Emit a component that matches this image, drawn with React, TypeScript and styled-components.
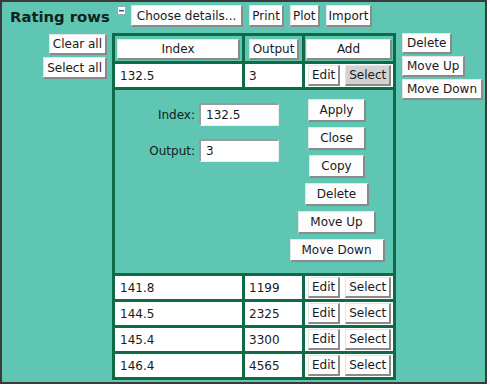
import styled, { createGlobalStyle } from "styled-components";

const GlobalStyle = createGlobalStyle`
  body {
    margin: 0;
    font-family: "DejaVu Sans", "Liberation Sans", sans-serif;
    background: #ffffff;
  }
`;

const Panel = styled.div`
  width: 487px;
  height: 384px;
  box-sizing: border-box;
  border: 2px solid #3a3a3a;
  background-color: #5ec6b3;
  color: #10221c;
`;

const TopBar = styled.div`
  display: flex;
  align-items: center;
  height: 31px;
  box-sizing: border-box;
  padding: 3px 0 6px 8px;
`;

const Title = styled.div`
  font-size: 14.8px;
  font-weight: 700;
  white-space: nowrap;
`;

const Toggle = styled.svg`
  align-self: flex-start;
  margin: 1px 5px 0 7px;
`;

const ButtonGroup = styled.div`
  display: flex;
  gap: 6px;
`;

const Button = styled.button<{ $h?: number; $pad?: number; $full?: boolean; $on?: boolean }>`
  box-sizing: border-box;
  height: ${(p) => p.$h ?? 21}px;
  width: ${(p) => (p.$full ? "100%" : "auto")};
  padding: 0 ${(p) => p.$pad ?? 3}px;
  margin: 0;
  font-family: "DejaVu Sans", "Liberation Sans", sans-serif;
  font-size: 12px;
  line-height: 14px;
  color: #1a1a1a;
  background: ${(p) => (p.$on ? "#d2d2d2" : "#fdfdfd")};
  border-style: solid;
  border-width: 1px 2px 2px 1px;
  border-color: #e4e4e4 #8a8a8a #8a8a8a #e4e4e4;
  white-space: nowrap;
  cursor: pointer;
`;

const Body = styled.div`
  display: flex;
  align-items: flex-start;
`;

const LeftCol = styled.div`
  width: 105px;
  flex-shrink: 0;
  display: flex;
  flex-direction: column;
  align-items: flex-end;
  gap: 2px;
  padding-top: 1px;
`;

const RightCol = styled.div`
  margin-left: 6px;
  display: flex;
  flex-direction: column;
  align-items: flex-start;
  gap: 2px;
`;

const Grid = styled.table`
  flex-shrink: 0;
  width: 284px;
  margin-left: 5px;
  border-collapse: separate;
  border-spacing: 3px;
  background-color: #0e6b45;
  table-layout: fixed;
`;

const HeadCell = styled.td<{ $pad?: string }>`
  box-sizing: border-box;
  height: 25px;
  padding: ${(p) => p.$pad ?? "0 2px"};
  background-color: #5ec6b3;
  text-align: center;
  vertical-align: middle;
`;

const Cell = styled.td<{ $pad?: number }>`
  height: 23px;
  padding: 0 ${(p) => p.$pad ?? 5}px;
  background-color: #ffffff;
  font-size: 12px;
  color: #1a1a1a;
  vertical-align: middle;
`;

const ActionCell = styled.td`
  height: 23px;
  padding: 0 2px 0 3px;
  background-color: #ffffff;
  vertical-align: middle;
`;

const Actions = styled.div`
  display: flex;
  gap: 5px;
`;

const EditCell = styled.td`
  height: 183px;
  padding: 0;
  background-color: #5ec6b3;
  vertical-align: top;
`;

const EditPanel = styled.div`
  display: flex;
  align-items: flex-start;
  padding-top: 9px;
`;

const Form = styled.div`
  width: 164px;
  margin-top: 4px;
  display: grid;
  grid-template-columns: 1fr 80px;
  column-gap: 4px;
  row-gap: 13px;
  align-items: center;
`;

const Label = styled.label`
  font-size: 12px;
  text-align: right;
  color: #10221c;
`;

const Field = styled.input`
  box-sizing: border-box;
  width: 80px;
  height: 23px;
  padding: 0 5px;
  margin: 0;
  font-family: "DejaVu Sans", "Liberation Sans", sans-serif;
  font-size: 12px;
  color: #1a1a1a;
  background: #ffffff;
  border-style: solid;
  border-width: 2px 1px 1px 2px;
  border-color: #9a9a9a #eeeeee #eeeeee #9a9a9a;
  outline: none;
`;

const Stack = styled.div`
  width: 96px;
  margin-left: 10px;
  display: flex;
  flex-direction: column;
  align-items: center;
  gap: 5px;
`;

const rows = [
  { index: "141.8", output: "1199" },
  { index: "144.5", output: "2325" },
  { index: "145.4", output: "3300" },
  { index: "146.4", output: "4565" },
];

export default function App() {
  return (
    <>
      <GlobalStyle />
      <Panel>
        <TopBar>
          <Title>Rating rows</Title>
          <Toggle width="9" height="9" viewBox="0 0 9 9">
            <rect x="0.5" y="0.5" width="8" height="8" fill="#ffffff" stroke="#8fa8c8" />
            <rect x="2" y="4" width="5" height="1.4" fill="#2a4f9a" />
          </Toggle>
          <ButtonGroup>
            <Button $h={22} $pad={5}>Choose details...</Button>
            <Button $h={22} $pad={2}>Print</Button>
            <Button $h={22} $pad={2}>Plot</Button>
            <Button $h={22} $pad={2}>Import</Button>
          </ButtonGroup>
        </TopBar>
        <Body>
          <LeftCol>
            <Button>Clear all</Button>
            <Button $h={22}>Select all</Button>
          </LeftCol>
          <Grid>
            <colgroup>
              <col style={{ width: 127 }} />
              <col style={{ width: 57 }} />
              <col style={{ width: 88 }} />
            </colgroup>
            <tbody>
              <tr>
                <HeadCell>
                  <Button $full>Index</Button>
                </HeadCell>
                <HeadCell $pad="0 1px 0 2px">
                  <Button>Output</Button>
                </HeadCell>
                <HeadCell $pad="0 1px">
                  <Button $full>Add</Button>
                </HeadCell>
              </tr>
              <tr>
                <Cell>132.5</Cell>
                <Cell $pad={4}>3</Cell>
                <ActionCell>
                  <Actions>
                    <Button>Edit</Button>
                    <Button $on>Select</Button>
                  </Actions>
                </ActionCell>
              </tr>
              <tr>
                <EditCell colSpan={3}>
                  <EditPanel>
                    <Form>
                      <Label>Index:</Label>
                      <Field defaultValue="132.5" />
                      <Label>Output:</Label>
                      <Field defaultValue="3" />
                    </Form>
                    <Stack>
                      <Button $h={23} $pad={11}>Apply</Button>
                      <Button $h={23} $pad={11}>Close</Button>
                      <Button $h={23} $pad={11}>Copy</Button>
                      <Button $h={23} $pad={11}>Delete</Button>
                      <Button $h={23} $pad={11}>Move Up</Button>
                      <Button $h={23} $pad={11}>Move Down</Button>
                    </Stack>
                  </EditPanel>
                </EditCell>
              </tr>
              {rows.map((r) => (
                <tr key={r.index}>
                  <Cell>{r.index}</Cell>
                  <Cell $pad={4}>{r.output}</Cell>
                  <ActionCell>
                    <Actions>
                      <Button>Edit</Button>
                      <Button>Select</Button>
                    </Actions>
                  </ActionCell>
                </tr>
              ))}
            </tbody>
          </Grid>
          <RightCol>
            <Button $pad={4}>Delete</Button>
            <Button $pad={4}>Move Up</Button>
            <Button $pad={4}>Move Down</Button>
          </RightCol>
        </Body>
      </Panel>
    </>
  );
}
